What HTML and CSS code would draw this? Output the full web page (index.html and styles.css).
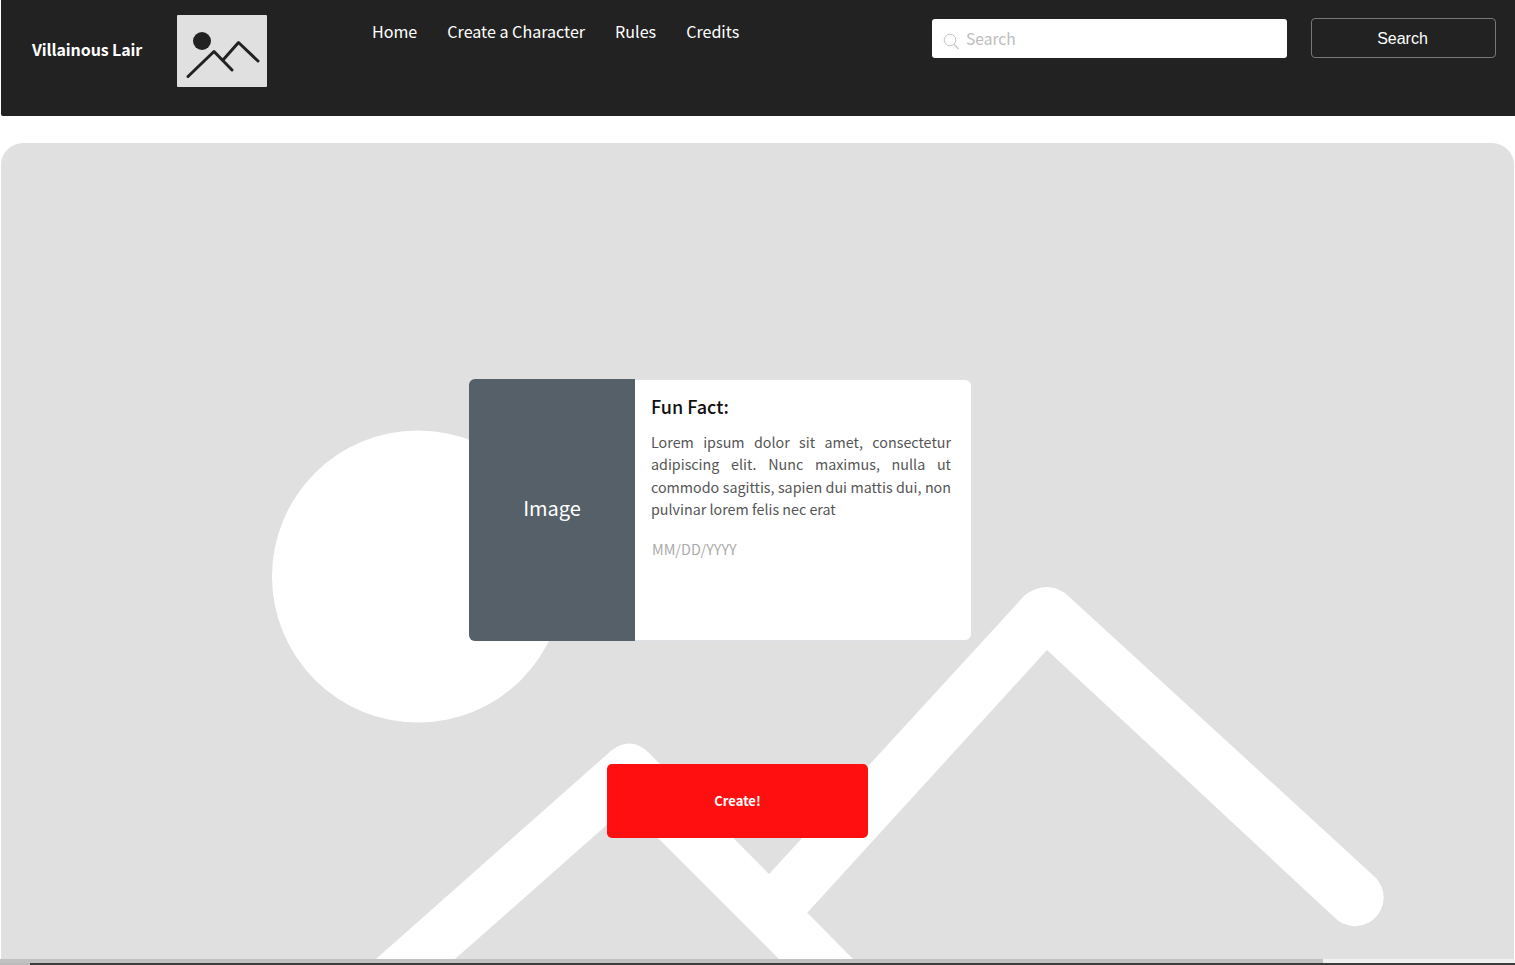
FILE: index.html
```html
<!DOCTYPE html>
<html>
	<head>
		<meta charset="UTF-8">
		<title>Villainous Lair</title>
		<link rel="stylesheet" href="styles.css">
	</head>
	<body>
		<div id="header">
			<a href="#" class="brand">Villainous Lair</a>
			<div class="logo">
				<svg width="90" height="72" viewBox="0 0 90 72">
					<circle cx="25" cy="26" r="9" fill="#222"/>
					<path d="M11 61.5 37 36.500 55 55M46 45 61.500 27.500 81 46" fill="none" stroke="#222" stroke-width="3" stroke-linecap="round" stroke-linejoin="round"/>
				</svg>
			</div>
			<ul class="nav">
				<li><a href="#">Home</a></li>
				<li><a href="#">Create a Character</a></li>
				<li><a href="#">Rules</a></li>
				<li><a href="#">Credits</a></li>
			</ul>
			<div class="searchBox">
				<svg width="17" height="17" viewBox="0 0 17 17">
					<circle cx="7" cy="7" r="5.800" fill="none" stroke="#c4c4c4" stroke-width="1"/>
					<path d="M11.200 11.200 15.500 16" fill="none" stroke="#c4c4c4" stroke-width="1.200"/>
				</svg>
				<input type="text" placeholder="Search">
			</div>
			<button class="searchBtn">Search</button>
		</div>
		<div id="hero">
			<svg class="heroBg" width="1513" height="816" viewBox="1 143 1513 816">
				<circle cx="418" cy="576.500" r="146" fill="#fff"/>
				<path d="M376 959 612 750Q633 735 651 755L853 959 779 959 627 807 455 959Z" fill="#fff"/>
				<path d="M807 913 1047 650 1334 917A28 28 0 0 0 1376 878L1065 593Q1046 580 1025 595L760 884 790 905Z" fill="#fff"/>
			</svg>
			<div class="card">
				<div class="cardImg">Image</div>
				<div class="cardBody">
					<h3>Fun Fact:</h3>
					<p>Lorem ipsum dolor sit amet, consectetur adipiscing elit. Nunc maximus, nulla ut commodo sagittis, sapien dui mattis dui, non pulvinar lorem felis nec erat</p>
					<span class="date">MM/DD/YYYY</span>
				</div>
			</div>
			<button class="createBtn">Create!</button>
		</div>
		<div id="scroll">
			<div class="thumb"></div>
		</div>
		<div id="edge"></div>
	</body>
</html>
```

FILE: styles.css
```css
* {
	margin: 0;
	padding: 0;
	border: none;
	box-sizing: border-box;
}
html, body {
	height: 965px;
	overflow: hidden;
}
ul, li {
	list-style: none;
}
a {
	color: #fff;
	text-decoration: none;
}
body {
	background: #fff;
	font-family: "Noto Sans CJK SC", "Noto Sans", sans-serif;
	display: flex;
	flex-direction: column;
}

#header {
	height: 116px;
	margin-left: 1px;
	margin-bottom: 27px;
	background: #222;
	border-bottom-left-radius: 2px;
	display: flex;
	align-items: flex-start;
	flex-shrink: 0;
}
.brand {
	margin: 36px 0 0 30px;
	padding-left: 1px;
	width: 146px;
	font-size: 16px;
	letter-spacing: -0.100px;
	line-height: 26px;
	font-weight: 700;
}
.logo {
	width: 90px;
	height: 72px;
	margin-top: 15px;
	background: #e0e0e0;
	border-radius: 1px;
}
.logo svg {
	display: block;
}
.nav {
	display: flex;
	gap: 30px;
	margin: 18px 0 0 105px;
	font-size: 16.100px;
	line-height: 26px;
	width: 560px;
}
.searchBox {
	width: 355px;
	height: 39px;
	margin-top: 19px;
	padding-left: 11px;
	background: #fff;
	border-radius: 3px;
	display: flex;
	align-items: center;
	gap: 6px;
}
.searchBox svg {
	margin-top: 5px;
	flex-shrink: 0;
}
.searchBox input {
	flex: 1;
	min-width: 0;
	margin-top: -2px;
	font-family: inherit;
	font-size: 15.600px;
	outline: none;
	background: none;
}
.searchBox input::placeholder {
	color: #bdbdbd;
}
.searchBtn {
	width: 185px;
	height: 40px;
	margin: 18px 0 0 24px;
	padding: 1px 2px 0 0;
	background: #222;
	border: 1px solid #777;
	border-radius: 4px;
	color: #fff;
	font-family: "Liberation Sans", sans-serif;
	font-size: 16px;
}

#hero {
	height: 816px;
	margin: 0 1px;
	padding: 236px 0 0 468px;
	background: #e0e0e0;
	border-radius: 22px 22px 0 0;
	position: relative;
	overflow: hidden;
	flex-shrink: 0;
}
.heroBg {
	position: absolute;
	left: 0;
	top: 0;
}
.card {
	width: 503px;
	height: 262px;
	position: relative;
	display: flex;
	background: #dee2e6;
	border-radius: 6px;
}
.cardImg {
	width: 166px;
	padding-bottom: 5px;
	background: #566069;
	color: #fff;
	border-radius: 6px 0 0 6px;
	font-size: 20px;
	display: flex;
	align-items: center;
	justify-content: center;
}
.cardBody {
	flex: 1;
	margin: 1px 1px 1px 0;
	padding: 13px 20px 0 16px;
	background: #fff;
	border-radius: 0 6px 6px 0;
}
.cardBody h3 {
	font-size: 18px;
	line-height: 26px;
	font-weight: 500;
	color: #111;
	margin-bottom: 12px;
}
.cardBody p {
	font-size: 14.300px;
	line-height: 22.400px;
	color: #555;
	text-align: justify;
	margin-bottom: 17px;
}
.date {
	display: block;
	margin-left: 1px;
	font-size: 14.400px;
	line-height: 22px;
	color: #aaa;
}
.createBtn {
	display: block;
	position: relative;
	width: 261px;
	height: 74px;
	margin: 123px 0 0 138px;
	padding-bottom: 2px;
	background: #ff0f0f;
	border-radius: 5px;
	color: #fff;
	font-family: inherit;
	font-size: 13px;
	font-weight: 700;
}

#scroll {
	height: 4px;
	background: #f1f1f1;
	flex-shrink: 0;
}
.thumb {
	width: 1323px;
	height: 4px;
	background: #c1c1c1;
}
#edge {
	height: 2px;
	background: #3c3c3c;
	border-left: 30px solid #bbb;
	flex-shrink: 0;
}
```
